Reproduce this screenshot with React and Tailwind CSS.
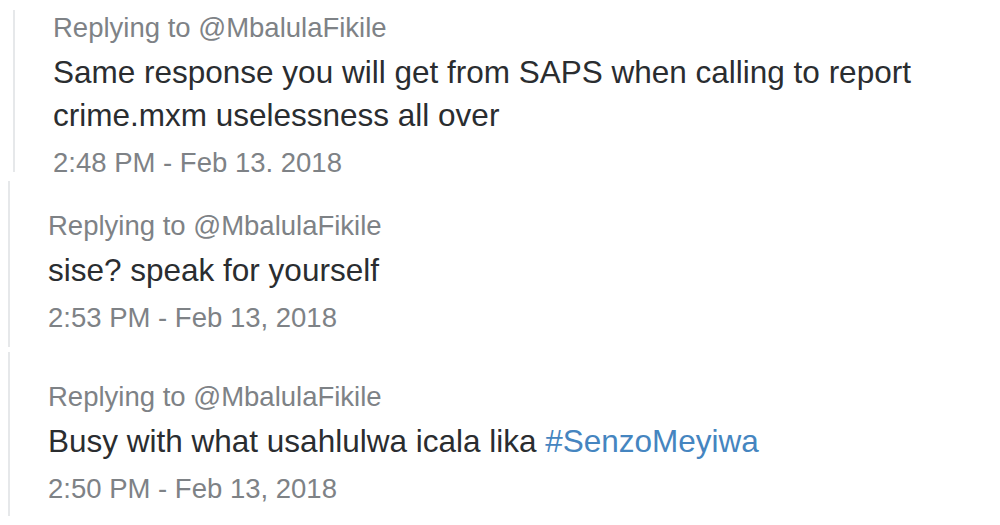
const replies = [
  {
    id: 1,
    body: "Same response you will get from SAPS when calling to report crime.mxm uselessness all over",
    time: "2:48 PM - Feb 13, 2018",
  },
  {
    id: 2,
    body: "sise? speak for yourself",
    time: "2:53 PM - Feb 13, 2018",
  },
  {
    id: 3,
    body: "Busy with what usahlulwa icala lika ",
    tag: "#SenzoMeyiwa",
    time: "2:50 PM - Feb 13, 2018",
  },
];

function Reply({ reply, className }) {
  return (
    <div className={"border-l-2 border-[#e6e8ea] pl-[38px] pr-10 " + className}>
      <p className="text-[27.5px] leading-[36px] text-[#7e8286]">
        Replying to @MbalulaFikile
      </p>
      <p className="mt-[4.5px] text-[31.5px] leading-[43px] text-[#2a2d30]">
        {reply.body}
        {reply.tag && <span className="text-[#4585c0]">{reply.tag}</span>}
      </p>
      <p className="mt-[8px] text-[27.5px] leading-[36px] text-[#7e8286]">{reply.time}</p>
    </div>
  );
}

export default function App() {
  return (
    <div
      className="w-[1000px] h-[525px] bg-white overflow-hidden"
      style={{ fontFamily: '"Liberation Sans", Arial, sans-serif' }}
    >
      <div className="pt-[10px]">
        <Reply reply={replies[0]} className="ml-[13px] h-[162px] overflow-hidden" />
      </div>
      <Reply reply={replies[1]} className="ml-[8px] mt-[9px] h-[166px] pt-[27px]" />
      <Reply reply={replies[2]} className="ml-[8px] mt-[5px] h-[164px] pt-[27px]" />
    </div>
  );
}
